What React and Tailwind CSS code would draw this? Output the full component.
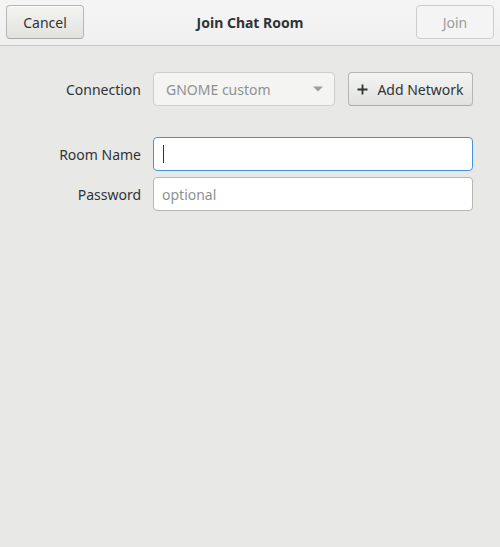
import React from "react";

export default function App() {
  const font = { fontFamily: '"Noto Sans", "Open Sans", sans-serif' };
  return (
    <div
      className="w-[500px] h-[547px] bg-[#e8e8e7] flex flex-col text-[14px] text-[#2e3436]"
      style={font}
    >
      <div className="h-[46px] shrink-0 bg-gradient-to-b from-[#f5f5f5] to-[#f0f0f0] border-b border-[#c6c6c4] flex items-center justify-between px-[6px] pb-[1px]">
        <button className="w-[78px] h-[34px] rounded-[4px] border border-[#b6b6b3] border-b-[#a9a9a6] bg-gradient-to-b from-[#f4f4f3] to-[#e2e2df] text-[#2e3436] shadow-[0_1px_0_rgba(255,255,255,0.8)_inset]">
          Cancel
        </button>
        <div className="font-bold text-[#2e3436]">Join Chat Room</div>
        <button className="w-[78px] h-[34px] rounded-[4px] border border-[#cdcdcb] bg-[#f4f4f4] text-[#9a9c9c]">
          Join
        </button>
      </div>
      <div className="pt-[26px] pr-[27px] flex flex-col">
        <div className="flex items-center h-[34px]">
          <div className="w-[141px] text-right">Connection</div>
          <div className="ml-[12px] flex-1 h-[34px] rounded-[4px] border border-[#cdcdcb] bg-[#f4f4f3] flex items-center justify-between pl-[12px] pr-[10px] text-[#8e9192]">
            <span>GNOME custom</span>
            <svg width="12" height="8" viewBox="0 0 12 8">
              <path d="M1 1.5 L11 1.5 L6 6.5 Z" fill="#9c9e9e" />
            </svg>
          </div>
          <button className="ml-[13px] w-[125px] h-[34px] rounded-[4px] border border-[#b6b6b3] border-b-[#a9a9a6] bg-gradient-to-b from-[#f4f4f3] to-[#e2e2df] flex items-center justify-center gap-[9px] text-[#2e3436]">
            <svg width="11" height="11" viewBox="0 0 11 11">
              <path d="M5.5 0.5 V10.5 M0.5 5.5 H10.5" stroke="#2e3436" strokeWidth="1.8" />
            </svg>
            <span>Add Network</span>
          </button>
        </div>
        <div className="flex items-center h-[34px] mt-[31px]">
          <div className="w-[141px] text-right">Room Name</div>
          <div className="ml-[12px] flex-1 h-[34px] rounded-[4px] border border-[#4a90d9] bg-white flex items-center pl-[9px]">
            <div className="w-[1px] h-[18px] bg-[#2e3436]" />
          </div>
        </div>
        <div className="flex items-center h-[34px] mt-[6px]">
          <div className="w-[141px] text-right">Password</div>
          <div className="ml-[12px] flex-1 h-[34px] rounded-[4px] border border-[#b6b6b3] bg-white flex items-center pl-[8px] text-[#8e9192]">
            optional
          </div>
        </div>
      </div>
    </div>
  );
}
